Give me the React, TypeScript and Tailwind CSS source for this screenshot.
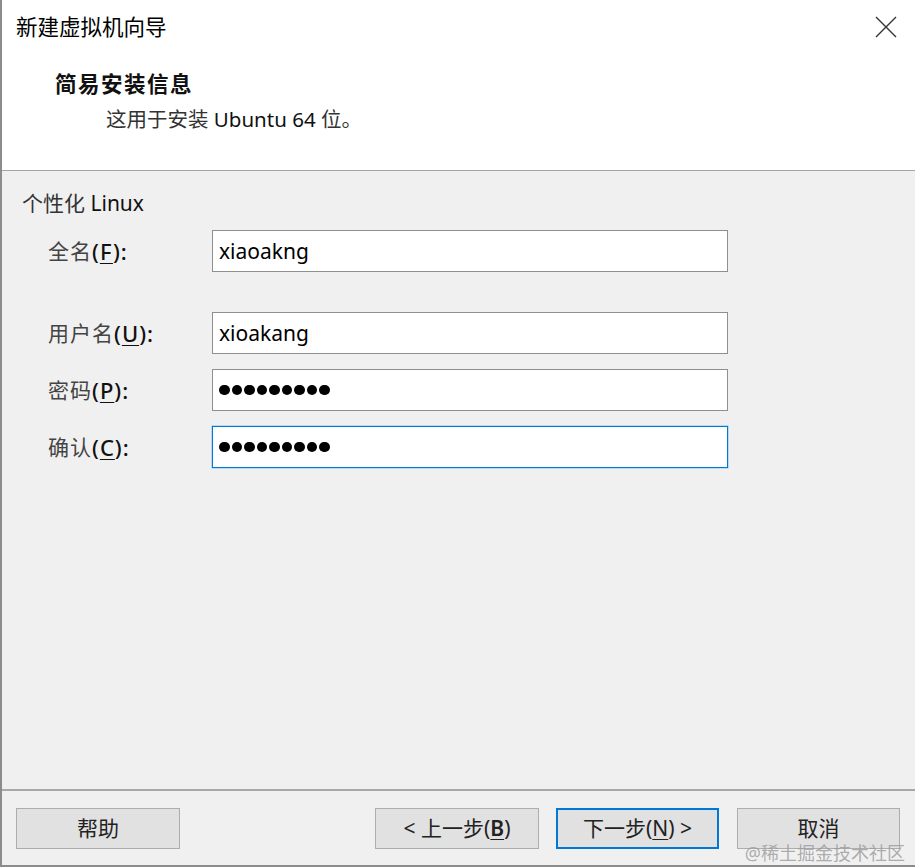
const SANS = "font-['Noto_Sans','Noto_Sans_CJK_SC',sans-serif]";

function Dots() {
  return (
    <div className="flex items-center gap-[2px]">
      {Array.from({ length: 9 }).map((_, i) => (
        <span key={i} className="block h-[10.5px] w-[10.5px] rounded-full bg-black" />
      ))}
    </div>
  );
}

function Field({ label, hot, value, password, focused }: { label: string; hot: string; value?: string; password?: boolean; focused?: boolean }) {
  return (
    <>
      <div className="flex items-center text-[21px] leading-none">
        <span className="tracking-[1px] text-[#444]">{label}</span>
        <span className="text-[22px] font-medium tracking-[1px] text-[#111]">
          (<span className="underline decoration-1 underline-offset-[3px]">{hot}</span>):
        </span>
      </div>
      <div
        className={`flex h-[42px] items-center bg-white pl-[6px] ${
          focused ? 'border border-[#0078d7] shadow-[0_0_0_0.5px_#7ec3f0]' : 'border border-[#8f8f8f]'
        }`}
      >
        {password ? <Dots /> : <span className="text-[21px] leading-none text-black">{value}</span>}
      </div>
    </>
  );
}

function Button({ children, primary, wide }: { children: React.ReactNode; primary?: boolean; wide?: boolean }) {
  return (
    <button
      className={`flex h-[41px] items-center justify-center bg-[#e1e1e1] text-[21px] leading-none text-[#222] ${
        wide ? 'w-[164px]' : 'w-[163px]'
      } ${primary ? 'border-2 border-[#0078d7]' : 'border border-[#adadad]'}`}
    >
      {children}
    </button>
  );
}

export default function App() {
  return (
    <div className={`relative flex h-[867px] w-[915px] flex-col border-b-2 border-l-2 border-[#8c8c8c] bg-[#f0f0f0] ${SANS}`}>
      {/* header */}
      <div className="relative h-[171px] shrink-0 border-b border-[#a3a3a3] bg-white">
        <div className="pl-[14px] pt-[12px] text-[21.5px] leading-[30px] text-black">新建虚拟机向导</div>
        <button className="absolute right-[18px] top-[16px] h-[22px] w-[22px]">
          <svg viewBox="0 0 22 22" className="h-full w-full" fill="none" stroke="#333" strokeWidth="1.4">
            <path d="M1 1 L21 21 M21 1 L1 21" />
          </svg>
        </button>
        <div className="pl-[53px] pt-[27px] text-[21.5px] font-bold leading-[30px] tracking-[1.5px] text-[#111]">
          简易安装信息
        </div>
        <div className="pl-[104px] pt-[5px] text-[20.5px] leading-[30px] text-[#333]">
          这用于安装 <span className="text-[#111]">Ubuntu 64</span> 位。
        </div>
      </div>

      {/* content */}
      <div className="flex-1">
        <div className="pl-[20px] pt-[17px] text-[21px] leading-[30px] text-[#333]">
          个性化 <span className="text-[#111]">Linux</span>
        </div>
        <div className="mt-[12px] grid grid-cols-[164px_516px] gap-y-[15px] pl-[46px]">
          <Field label="全名" hot="F" value="xiaoakng" />
          <div className="col-span-2 h-[10px]" />
          <Field label="用户名" hot="U" value="xioakang" />
          <Field label="密码" hot="P" password />
          <Field label="确认" hot="C" password focused />
        </div>
      </div>

      {/* footer */}
      <div className="h-[76px] shrink-0 border-t-2 border-[#a8a8a8]">
        <div className="flex pl-[14px] pr-[15px] pt-[17px]">
          <Button wide>帮助</Button>
          <div className="flex-1" />
          <Button wide>
            &lt; 上一步(<span className="font-semibold underline decoration-1 underline-offset-[3px]">B</span>)
          </Button>
          <div className="w-[17px]" />
          <Button primary>
            下一步(<span className="underline decoration-1 underline-offset-[3px]">N</span>) &gt;
          </Button>
          <div className="w-[18px]" />
          <Button>取消</Button>
        </div>
      </div>

      <div className="pointer-events-none absolute bottom-[3px] right-[10px] text-[18px] leading-none text-[#9a9a9a]/80">
        @稀土掘金技术社区
      </div>
    </div>
  );
}
